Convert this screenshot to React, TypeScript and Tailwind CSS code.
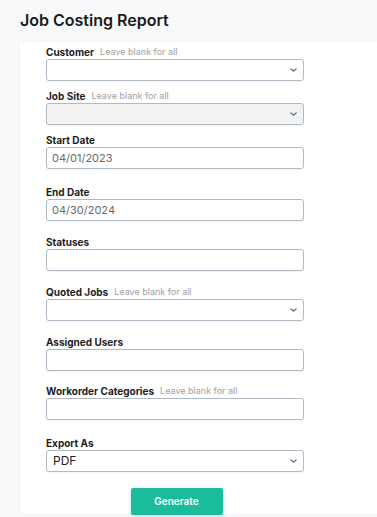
import type { ReactNode } from 'react'

function Chevron() {
  return (
    <svg width="7" height="4" viewBox="0 0 7 4" className="absolute right-[6px] top-1/2 -translate-y-1/2" fill="none">
      <path d="M0.8 0.8l2.7 2.4 2.7-2.4" stroke="#4a5b6d" strokeWidth="1.1" strokeLinecap="round" strokeLinejoin="round" />
    </svg>
  )
}

interface FieldProps {
  label: string
  hint?: boolean
  className?: string
  children: ReactNode
}

function Field({ label, hint, className = '', children }: FieldProps) {
  return (
    <div className={`flex flex-col ${className}`}>
      <div className="flex h-[14px] items-center gap-[6px]">
        <span className="text-[10px] font-bold text-[#1d1d1f]">{label}</span>
        {hint && <span className="text-[9px] text-[#a0a0a0]">Leave blank for all</span>}
      </div>
      {children}
    </div>
  )
}

function Box({ value, select, disabled, big }: { value?: string; select?: boolean; disabled?: boolean; big?: boolean }) {
  return (
    <div
      className={`relative flex h-[22px] w-[258px] items-center rounded-[3px] border border-[#b0bac4] shadow-[0_1px_2px_rgba(0,0,0,0.06)] ${
        disabled ? 'bg-[#f2f2f2]' : 'bg-white'
      }`}
    >
      {value && (
        <span className={big ? 'pl-[6px] text-[12px] text-[#222]' : 'pl-[5px] text-[11px] text-[#6a6a6a]'}>{value}</span>
      )}
      {select && <Chevron />}
    </div>
  )
}

export default function App() {
  return (
    <div className="h-[517px] w-full overflow-hidden bg-[#f8f9fb] font-['Inter',sans-serif]">
      <h1 className="flex h-[42px] items-center pb-[3px] pl-[20px] text-[16px] font-semibold text-[#1a1a1a]">
        Job Costing Report
      </h1>
      <div className="ml-[20px] flex h-[472px] flex-col rounded-bl-[6px] bg-white pl-[26px] pt-[3px] shadow-[0_0_4px_rgba(0,0,0,0.04)]">
        <Field label="Customer" hint>
          <Box select />
        </Field>
        <Field label="Job Site" hint className="mt-[8px]">
          <Box select disabled />
        </Field>
        <Field label="Start Date" className="mt-[8px]">
          <Box value="04/01/2023" />
        </Field>
        <Field label="End Date" className="mt-[16px]">
          <Box value="04/30/2024" />
        </Field>
        <Field label="Statuses" className="mt-[14px]">
          <Box />
        </Field>
        <Field label="Quoted Jobs" hint className="mt-[14px]">
          <Box select />
        </Field>
        <Field label="Assigned Users" className="mt-[14px]">
          <Box />
        </Field>
        <Field label="Workorder Categories" hint className="mt-[13px]">
          <Box />
        </Field>
        <Field label="Export As" className="mt-[16px]">
          <Box value="PDF" select big />
        </Field>
        <div className="mt-[16px] flex w-[258px] justify-center pl-[3px]">
          <button className="h-[27px] w-[92px] rounded-[2px] bg-[#1abc9c] text-[10px] font-semibold text-white shadow-[0_1px_4px_rgba(80,170,230,0.35)]">
            Generate
          </button>
        </div>
      </div>
    </div>
  )
}
